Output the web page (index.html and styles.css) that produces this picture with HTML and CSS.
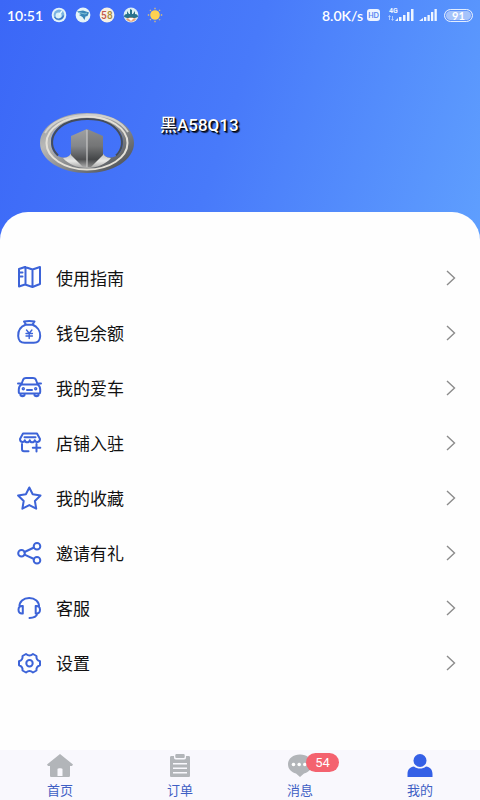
FILE: index.html
```html
<!DOCTYPE html>
<html lang="zh-CN">
<head>
<meta charset="utf-8">
<meta name="viewport" content="width=device-width, initial-scale=1">
<title>我的</title>
<link rel="stylesheet" href="styles.css">
</head>
<body>
<header class="hero">
  <div class="status">
    <div class="status-group">
      <span class="clock">10:51</span>
      <svg class="app-dot" viewBox="0 0 16 16"><circle cx="8" cy="8" r="7.3" fill="#e4f3fa"/><circle cx="8" cy="8" r="5.400" fill="#79b3e2"/><circle cx="7.6" cy="8.4" r="3" fill="#d9f1f7"/><path d="M8 8l3-4" stroke="#e9fbff" stroke-width="1.4"/><path d="M3.500 10a5 5 0 0 0 9-1.500" fill="none" stroke="#3c75c4" stroke-width="1.2"/></svg>
      <svg class="app-dot" viewBox="0 0 16 16"><circle cx="8" cy="8" r="7.4" fill="#e5f4f8"/><path d="M2 4.500l6-1 6 2-1.500 3.500-2 .5L9.500 13 7.500 10 4 8l2-.8z" fill="#3886b8"/><path d="M4 5.500l6 1.500 2-1" fill="none" stroke="#82c2d6"/></svg>
      <svg class="app-dot" viewBox="0 0 16 16"><circle cx="8" cy="8" r="7.4" fill="#f7f1e5"/><text class="dot-text" x="2" y="11.500" fill="#c4574b">5</text><text class="dot-text" x="8" y="11.500" fill="#a98b37">8</text></svg>
      <svg class="app-dot" viewBox="0 0 16 16"><circle cx="8" cy="8" r="7.400" fill="#dceef3"/><path d="M1 10c0-2 1-3 3-3V4l2 3h1V2l2 1v4h1l2-3v3c2 0 3 1 3 3l-3 1H4z" fill="#28718c"/><path d="M3 12c3-2 7-2 10 0-2 3.500-8 3.500-10 0z" fill="#e7a37b"/><path d="M5 11h6l-3 3z" fill="#fff"/></svg>
      <svg class="app-dot" viewBox="0 0 16 16"><circle cx="8" cy="8" r="4.800" fill="#ffd250"/><path d="M8 .8v1.400M8 13.800v1.400M.8 8h1.400M13.800 8h1.400M2.900 2.900l1 1M12.100 12.100l1 1M13.100 2.900l-1 1M3.900 12.100l-1 1" stroke="#dfc173" stroke-width="1.300"/></svg>
    </div>
    <div class="status-group status-right">
      <span class="speed">8.0K/s</span>
      <span class="hd">HD</span>
      <svg class="signals" viewBox="0 0 52 16" fill="#eef5ff"><text class="net-text" x="1" y="6">4G</text><path d="M1.500 9v4M.5 10l1-1.500 1 1.500M4.500 9v4M3.500 12l1 1.500 1-1.500" fill="none" stroke="#c5dafc" stroke-width=".8"/><path d="M7 14l3-3v3zM11 10h2.500v4H11zM15 8h2.500v6H15zM19 5h2.500v9H19zM23 2h2.500v12H23zM31 14l4-3v3zM36 10h2.300v4H36zM39.500 8h2.300v6h-2.300zM43 5h2.300v9H43zM46.500 2h2.300v12h-2.300z"/></svg>
      <span class="battery">91</span>
    </div>
  </div>
  <div class="profile">
    <svg class="emblem" viewBox="0 0 96 62" role="img" aria-label="车标">
      <defs>
        <linearGradient id="rim" x1="0" y1="0" x2="1" y2="1"><stop offset="0" stop-color="#8c9096"/><stop offset=".3" stop-color="#b9b9b7"/><stop offset=".6" stop-color="#85878a"/><stop offset="1" stop-color="#3c4148"/></linearGradient>
        <linearGradient id="wing" x1="0" y1="0" x2="0" y2="1"><stop offset="0" stop-color="#a9abb0"/><stop offset=".6" stop-color="#e8e8e6"/><stop offset="1" stop-color="#a5a5a5"/></linearGradient>
        <linearGradient id="left" x1="0" y1="0" x2="0" y2="1"><stop offset="0" stop-color="#a0a1a1"/><stop offset=".45" stop-color="#85878a"/><stop offset=".8" stop-color="#4f5052"/><stop offset="1" stop-color="#aaa"/></linearGradient>
        <linearGradient id="right" x1="0" y1="0" x2="0" y2="1"><stop offset="0" stop-color="#8b8b8b"/><stop offset=".45" stop-color="#747576"/><stop offset=".8" stop-color="#444648"/><stop offset="1" stop-color="#888"/></linearGradient>
      </defs>
      <path fill="url(#rim)" fill-rule="evenodd" d="M1 31C1 14 22 1 48 1s47 13 47 30-21 30-47 30S1 48 1 31zM12 30c0 9 5 15.500 13 15.500 4 0 7-2.500 9-7h28c2 4.500 5 7 9 7 8 0 13-6.500 13-15.500C84 15.500 68 7 48 7S12 15.500 12 30z"/>
      <path fill="url(#wing)" d="M24 46c5 0 8-3 9.500-7.500h29C64 43 67 46 72 46c-5 6-14 10-24 10s-19-4-24-10z"/>
      <path fill="none" stroke="#454d5a" stroke-width="2" d="M19 43.500C5 30 16 7.500 48 7s43 23.500 29 36.500"/>
      <ellipse cx="48" cy="31" rx="40.500" ry="26.500" fill="none" stroke="#e4e1d9" stroke-width="2"/>
      <path fill="none" stroke="#d0d0ce" stroke-width="2" d="M6 21C13 9 28 3.500 48 3S82 9 89 20"/>
      <path fill="url(#left)" d="M48 17L32 24v19l12 12h4z"/>
      <path fill="url(#right)" d="M48 17l16 7v19L52 55h-4z"/>
      <path d="M48 18v37" stroke="#c8c8c8" stroke-width="1.200"/>
    </svg>
    <h1 class="plate">黑A58Q13</h1>
  </div>
</header>

<main class="panel">
  <nav class="menu" aria-label="菜单">
    <a class="row" href="#guide"><svg class="row-icon" viewBox="0 0 27 27"><path d="M3 5l6-2 7.500 2.500L24 3v17l-7.500 3L9 20.500 3 22.500zM9.500 3v17.500M16.500 5.500V23M3 8.500h3.500M3 12.500h3.500"/></svg><span class="row-label">使用指南</span><svg class="chevron" viewBox="0 0 10 16"><path d="M1 1l7.500 7L1 15"/></svg></a>
    <a class="row" href="#wallet"><svg class="row-icon" viewBox="0 0 27 27"><path d="M10 5.500L8 2.500c3.500-.8 7-.8 10.500 0l-2 3M9 5.800h8.500M9.500 5.800C5 7.500 2 11.800 2.200 17c.2 4.500 3 6.800 6.500 6.800h9.100c3.500 0 6.200-2.300 6.400-6.800.2-5.200-3.200-9.500-7.700-11.200"/><path class="thin" d="M10.500 11l2.700 3.200 2.700-3.200M13.200 14.200v5.300M10 14.500h6.400M10 17h6.400"/></svg><span class="row-label">钱包余额</span><svg class="chevron" viewBox="0 0 10 16"><path d="M1 1l7.500 7L1 15"/></svg></a>
    <a class="row" href="#cars"><svg class="row-icon" viewBox="0 0 27 27"><path d="M5.500 10l1.700-4.500C7.700 4.300 8.500 4 10 4h7c1.500 0 2.300.3 2.800 1.500L21.500 10M5.500 10.500h16c1.800 1 2.700 2.800 2.700 5V18c0 1-.5 1.500-1.200 1.500H4c-.7 0-1.200-.5-1.200-1.500v-2.500c0-2.200.9-4 2.700-5zM2 9.500h2.500M22.500 9.500H25M4.500 20v1c0 1.500 4 1.500 4 0v-1M18.500 20v1c0 1.500 4 1.500 4 0v-1M11 16h5"/><circle cx="7.300" cy="14.800" r=".7"/><circle cx="19.700" cy="14.800" r=".7"/></svg><span class="row-label">我的爱车</span><svg class="chevron" viewBox="0 0 10 16"><path d="M1 1l7.500 7L1 15"/></svg></a>
    <a class="row" href="#shop"><svg class="row-icon" viewBox="0 0 27 27"><path d="M7 4.500h14l3 5.500c0 3.500-4.500 4-5.200 1.200-.8 2.800-4.400 2.800-5 0-.8 2.800-4.400 2.800-5 0-.8 2.800-4.800 2.300-4.800-1.200zM8.500 8.300h11M6 15v5.200c0 1.300.6 2 2 2h4.500M20.500 15v7.500M16.800 18.700h7.500"/></svg><span class="row-label">店铺入驻</span><svg class="chevron" viewBox="0 0 10 16"><path d="M1 1l7.500 7L1 15"/></svg></a>
    <a class="row" href="#favorites"><svg class="row-icon" viewBox="0 0 27 27"><path d="M13.300 3.500l3.400 6.800 7.800 1.200-5.600 5.500 1.300 7.700-6.900-3.600-6.900 3.600 1.300-7.700-5.600-5.500 7.800-1.200z"/></svg><span class="row-label">我的收藏</span><svg class="chevron" viewBox="0 0 10 16"><path d="M1 1l7.500 7L1 15"/></svg></a>
    <a class="row" href="#invite"><svg class="row-icon" viewBox="0 0 27 27"><circle cx="5.500" cy="14.300" r="3.300"/><circle cx="21" cy="7.200" r="3.300"/><circle cx="21" cy="21.300" r="3.300"/><path d="M8.500 13l9.500-4.500M8.500 15.600l9.500 4.400"/></svg><span class="row-label">邀请有礼</span><svg class="chevron" viewBox="0 0 10 16"><path d="M1 1l7.500 7L1 15"/></svg></a>
    <a class="row" href="#support"><svg class="row-icon" viewBox="0 0 27 27"><path d="M3.500 13C3 7.500 7.500 4 13.200 4S23.400 7.500 23 13M6.800 12v7.500c-2.800.5-4.300-1-4.300-3.700s1.500-4.200 4.300-3.800zM19.700 12v7.500c2.800.5 4.300-1 4.300-3.700s-1.500-4.200-4.300-3.800zM21.500 19.500c-1 3-3.500 4.500-8 4.500"/></svg><span class="row-label">客服</span><svg class="chevron" viewBox="0 0 10 16"><path d="M1 1l7.500 7L1 15"/></svg></a>
    <a class="row" href="#settings"><svg class="row-icon" viewBox="0 0 27 27"><path d="M10 5c2 1.700 5 1.700 7 0l3.500 2c-.4 2.800 1 4.500 3.500 5.300v3.900c-2.500.8-3.900 2.500-3.500 5.300l-3.500 2c-2-1.700-5-1.700-7 0l-3.500-2c.4-2.800-1-4.500-3.500-5.300v-3.900C5.500 11.500 6.900 9.800 6.500 7z"/><circle cx="13.500" cy="14.300" r="3.200"/></svg><span class="row-label">设置</span><svg class="chevron" viewBox="0 0 10 16"><path d="M1 1l7.500 7L1 15"/></svg></a>
  </nav>
</main>

<nav class="tabs" aria-label="主导航">
  <a class="tab" href="#home"><svg class="tab-icon" viewBox="0 0 28 24"><path fill-rule="evenodd" d="M14 0l13 10.500-1 1.500h-2v9.500c0 1-.7 1.500-1.500 1.500h-17C4.500 23 4 22.500 4 21.500V12H2l-1-1.500zM11.500 15v7h5v-7c0-1-5-1-5 0z"/></svg><span>首页</span></a>
  <a class="tab" href="#orders"><svg class="tab-icon" viewBox="0 0 28 24"><path fill-rule="evenodd" d="M10 0h8c1 0 1 4 0 4h-8C9 4 9 0 10 0zM5.500 2H8c0 2.500 0 3.500 2 3.500h8c2 0 2-1 2-3.500h2.500c1 0 1.500.5 1.500 1.500v18c0 1-.5 1.500-1.500 1.500h-17C4.500 23 4 22.500 4 21.500v-18C4 2.500 4.500 2 5.500 2zM7 9v1.500h14V9zm0 4.500V15h14v-1.500zM7 18v1.500h14V18z"/></svg><span>订单</span></a>
  <a class="tab" href="#messages"><span class="icon-wrap"><svg class="tab-icon" viewBox="0 0 28 24"><path d="M14 .5c7 0 12 4 12 9.700 0 5-3.500 8-8 9.300L14 23l-4-3.500c-4.500-1.300-8-4.300-8-9.300C2 4.500 7 .5 14 .5z"/><circle cx="7.500" cy="10.500" r="1.800" fill="#fff"/><circle cx="13.200" cy="10.500" r="1.800" fill="#fff"/><circle cx="18.800" cy="10.500" r="1.800" fill="#fff"/></svg><span class="badge">54</span></span><span>消息</span></a>
  <a class="tab active" href="#me" aria-current="page"><svg class="tab-icon" viewBox="0 0 28 24"><circle cx="14" cy="6.500" r="6.500"/><path d="M1.500 23v-3c0-4.500 2.500-7 6.500-7.500 3.500 2.700 8.500 2.700 12 0 4 .5 6.500 3 6.500 7.500v3z"/></svg><span>我的</span></a>
</nav>
</body>
</html>
```
FILE: styles.css
```css
* {
  box-sizing: border-box;
}

body {
  margin: 0;
  min-height: 100vh;
  display: flex;
  flex-direction: column;
  background: #fefefe;
  color: #111;
  font-family: Roboto, "Noto Sans CJK SC", sans-serif;
}

a {
  color: inherit;
  text-decoration: none;
}

svg {
  display: block;
  flex: none;
}

.hero {
  padding-bottom: 66px;
  background: linear-gradient(108deg, #3b67f7 0%, #487afa 48%, #5f9ffe 100%);
  color: #fff;
}

.status {
  display: flex;
  justify-content: space-between;
  align-items: center;
  height: 30px;
  padding: 0 7px 0 7px;
  font-family: Lato, sans-serif;
  font-size: 14px;
  font-weight: 600;
}

.status-group {
  display: flex;
  align-items: center;
  gap: 8px;
}

.status-right {
  gap: 4px;
}

.app-dot {
  width: 16px;
  height: 16px;
}

.dot-text {
  font: 500 10px Roboto, sans-serif;
}

.net-text {
  font: 700 7px Roboto, sans-serif;
}

.hd {
  width: 13px;
  border-radius: 3px;
  background: #edf4ff;
  color: #5586f2;
  font-size: 7px;
  font-weight: 700;
  line-height: 12px;
  text-align: center;
}

.signals {
  width: 52px;
  height: 16px;
  margin-left: 4px;
}

.battery {
  width: 29px;
  border: 1px solid #e3eeff;
  border-radius: 7px;
  background: #a5c3fb;
  box-shadow: inset 0 0 0 1px #5f92fa;
  font-size: 11px;
  font-weight: 700;
  line-height: 11px;
  text-align: center;
}

.profile {
  display: flex;
  align-items: flex-start;
  gap: 25px;
  padding: 82px 24px 0 39px;
}

.emblem {
  width: 96px;
  height: 62px;
}

.plate {
  margin: 0;
  font-size: 17px;
  font-weight: 500;
  line-height: 26px;
  text-shadow: 1px 1px 1px #000, 2px 2px 1px #10204a;
}

.panel {
  flex: 1;
  margin-top: -28px;
  padding-top: 38px;
  border-radius: 28px 28px 0 0;
  background: #fefefe;
}

.row {
  display: flex;
  align-items: center;
  gap: 13px;
  height: 55px;
  padding: 0 24px 0 16px;
  font-size: 17px;
}

.row-icon {
  width: 27px;
  height: 27px;
  fill: none;
  stroke: #3c63d8;
  stroke-width: 2;
  stroke-linecap: round;
  stroke-linejoin: round;
}

.thin {
  stroke-width: 1.4;
}

.row-label {
  flex: 1;
}

.chevron {
  width: 10px;
  height: 16px;
  fill: none;
  stroke: #8c8c8c;
  stroke-width: 1.4;
}

.tabs {
  display: grid;
  grid-template-columns: repeat(4, 1fr);
  height: 50px;
  background: #f9f8fd;
  color: #3f5fc4;
}

.tab {
  display: flex;
  flex-direction: column;
  align-items: center;
  gap: 3px;
  padding-top: 4px;
  font-size: 13px;
  line-height: 20px;
}

.tab-icon {
  width: 28px;
  height: 24px;
  fill: #b2b5b9;
}

.active .tab-icon {
  fill: #3560e6;
}

.icon-wrap {
  position: relative;
}

.badge {
  position: absolute;
  top: -1px;
  left: 20px;
  width: 33px;
  border-radius: 10px;
  background: #f4626f;
  color: #fff;
  font-size: 13px;
  line-height: 19px;
  text-align: center;
}
```
